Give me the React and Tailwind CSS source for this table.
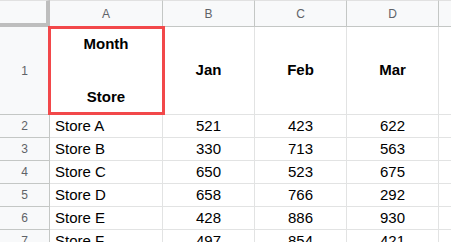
const columns = ["A", "B", "C", "D", ""];

const rows = [
  ["Store A", 521, 423, 622],
  ["Store B", 330, 713, 563],
  ["Store C", 650, 523, 675],
  ["Store D", 658, 766, 292],
  ["Store E", 428, 886, 930],
  ["Store F", 497, 854, 421],
];

export default function App() {
  return (
    <div
      className="w-[451px] h-[242px] overflow-hidden bg-white"
      style={{ fontFamily: '"Liberation Sans", Arial, sans-serif' }}
    >
      <div className="grid grid-cols-[50px_113px_92px_92px_92px_40px] grid-rows-[27px_88px_repeat(6,23px)] w-[479px]">
        {/* corner */}
        <div className="bg-[#f8f9fa] border-t border-[#e1e1e1] border-r-4 border-b-4 border-r-[#bebebe] border-b-[#bebebe]"></div>
        {columns.map((c, i) => (
          <div
            key={i}
            className="bg-[#f8f9fa] border-t border-t-[#e1e1e1] border-r border-r-[#c4c7c5] border-b border-b-[#c4c7c5] flex items-center justify-center text-[12px] text-[#5f6368]"
          >
            {c}
          </div>
        ))}

        {/* row 1 */}
        <div className="bg-[#f8f9fa] border-r border-b border-[#c4c7c5] flex items-center justify-center text-[12px] text-[#5f6368]">
          1
        </div>
        <div className="relative border-r border-b border-[#e2e3e3] flex flex-col items-center justify-center text-[15px] font-bold text-black leading-[26.5px]">
          <div>Month</div>
          <div>&nbsp;</div>
          <div>Store</div>
          <div className="absolute -left-[2px] -top-[1px] w-[117px] h-[89px] border-[3px] border-[#f2484a]"></div>
        </div>
        {["Jan", "Feb", "Mar", ""].map((m, i) => (
          <div
            key={i}
            className="border-r border-b border-[#e2e3e3] flex items-center justify-center text-[15px] font-bold text-black"
          >
            {m}
          </div>
        ))}

        {rows.map((r, ri) => (
          <Row key={ri} num={ri + 2} data={r} />
        ))}
      </div>
    </div>
  );
}

function Row({ num, data }) {
  return (
    <>
      <div className="bg-[#f8f9fa] border-r border-b border-[#c4c7c5] flex items-center justify-center text-[12px] text-[#5f6368]">
        {num}
      </div>
      <div className="border-r border-b border-[#e2e3e3] flex items-center pl-[5px] text-[15px] text-black">
        {data[0]}
      </div>
      {data.slice(1).map((v, i) => (
        <div
          key={i}
          className="border-r border-b border-[#e2e3e3] flex items-center justify-center text-[15px] text-black"
        >
          {v}
        </div>
      ))}
      <div className="border-r border-b border-[#e2e3e3]"></div>
    </>
  );
}
